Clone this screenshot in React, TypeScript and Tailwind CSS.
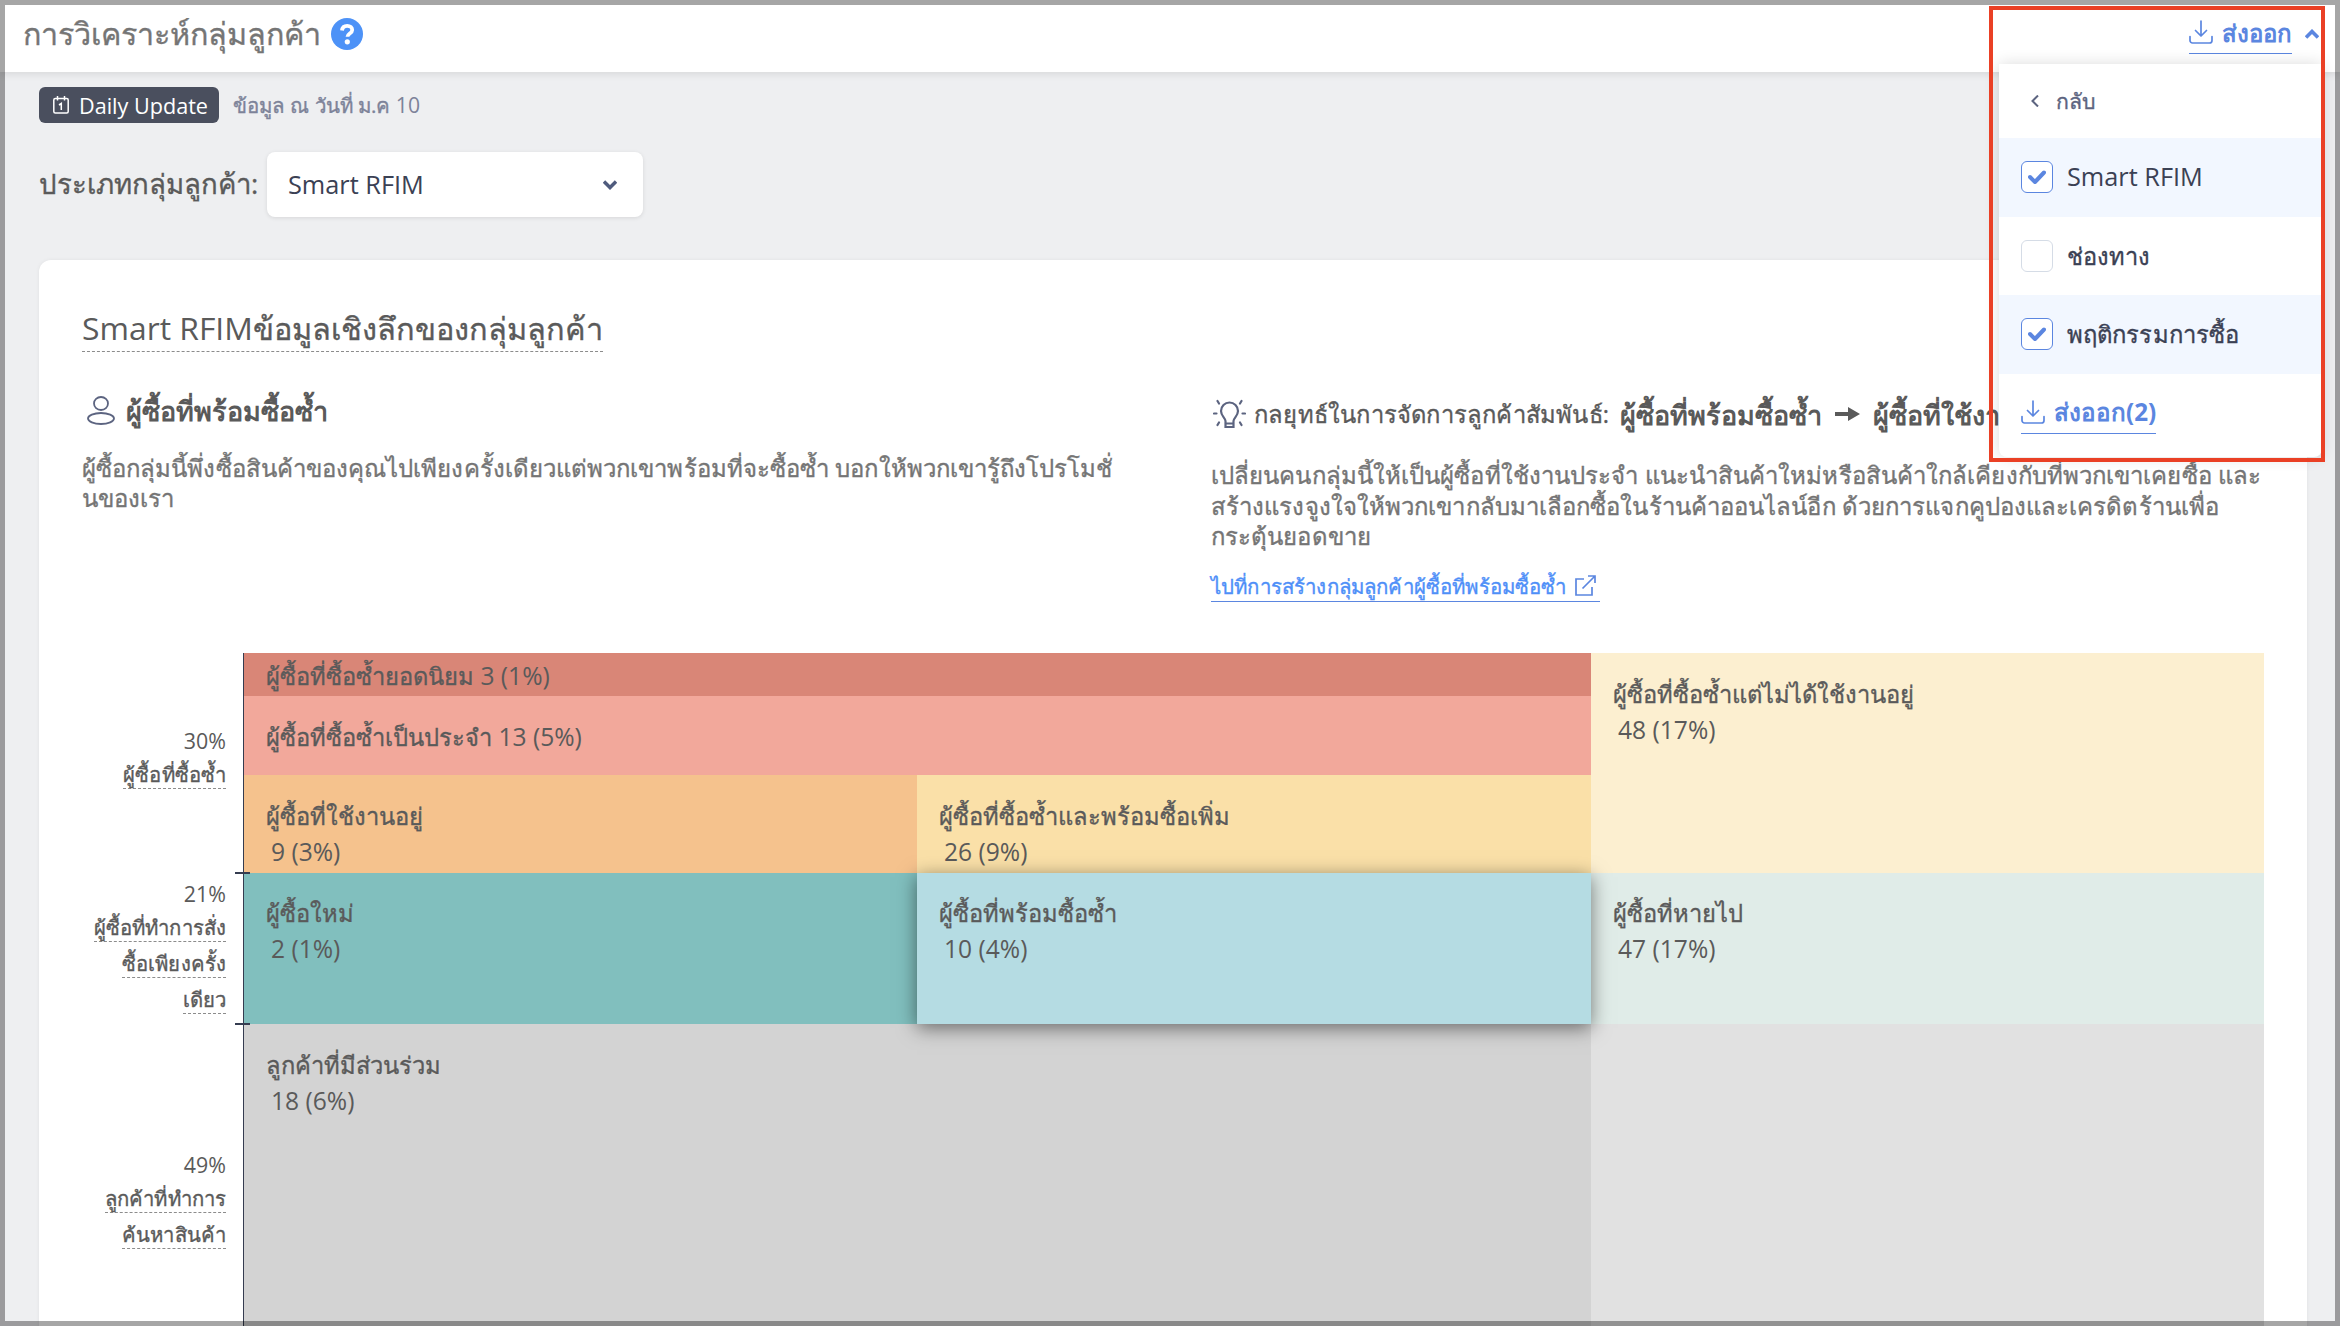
import type { ReactNode } from 'react';

function DownloadIcon() {
  return (
    <svg className="h-6 w-6 shrink-0" viewBox="0 0 24 24" fill="none" stroke="#5b86e0" strokeWidth="1.7" strokeLinecap="round" strokeLinejoin="round">
      <path d="M12 1v14.5M6.5 10.500l5.500 5.500 5.500-5.500M1 16.500v4a2.500 2.500 0 0 0 2.500 2.500h17a2.500 2.500 0 0 0 2.500-2.500v-4" />
    </svg>
  );
}

function Thai({ children }: { children: ReactNode }) {
  return <span className="text-[0.965em] [-webkit-text-stroke:0.35px_currentColor]">{children}</span>;
}

function Checkbox({ checked }: { checked: boolean }) {
  return (
    <span className={checked ? 'flex size-8 items-center justify-center rounded-md border border-[#5b86e0] bg-white' : 'flex size-8 rounded-md border border-[#d5dce6] bg-white'}>
      {checked && (
        <svg className="h-[14px] w-[18px]" viewBox="0 0 18 14" fill="none" stroke="#5b86e0" strokeWidth="4" strokeLinecap="round" strokeLinejoin="round">
          <path d="M2 7l5 5 9-9.500" />
        </svg>
      )}
    </span>
  );
}

function MenuRow({ label, checked }: { label: ReactNode; checked: boolean }) {
  return (
    <div className={checked ? 'flex h-[78.500px] items-center bg-[#f2f7ff] pl-[22px]' : 'flex h-[78.500px] items-center bg-white pl-[22px]'}>
      <Checkbox checked={checked} />
      <span className="ml-[14px] whitespace-nowrap text-[25.300px] text-[#3b4154]">{label}</span>
    </div>
  );
}

function ExportMenu() {
  return (
    <div className="absolute left-[1999px] top-16 h-[393px] w-[323px] rounded-b-lg bg-white shadow-[0_0_16px_rgba(0,0,0,0.14)]">
      <div className="flex h-[74px] items-center pl-8 text-[22px] text-[#5c6480]">
        <svg className="h-3 w-2" viewBox="0 0 8 12" fill="none" stroke="#5c6480" strokeWidth="2"><path d="M7 .5L1.500 6 7 11.500" /></svg>
        <span className="ml-[17px] pb-[2px]"><Thai>กลับ</Thai></span>
      </div>
      <MenuRow label="Smart RFIM" checked />
      <MenuRow label={<span className="text-[23.600px] [-webkit-text-stroke:0.35px_currentColor]">ช่องทาง</span>} checked={false} />
      <MenuRow label={<span className="text-[23.800px] tracking-[0.1px] [-webkit-text-stroke:0.35px_currentColor]">พฤติกรรมการซื้อ</span>} checked />
      <div className="ml-[22px] mt-[17px] flex h-[43px] w-fit items-center gap-[9px] border-b border-[#5b86e0] text-[24.200px] font-bold text-[#5b86e0]">
        <DownloadIcon />
        <span className="pt-[2px]">ส่งออก(2)</span>
      </div>
    </div>
  );
}

function Cell({ name, count, className }: { name: string; count: string; className: string }) {
  return (
    <div className={`whitespace-nowrap pl-[22px] leading-9 ${className}`}>
      <div><Thai>{name}</Thai></div>
      <div className="pl-[5px]">{count}</div>
    </div>
  );
}

function AxisGroup({ percent, lines, className }: { percent: string; lines: string[]; className: string }) {
  return (
    <div className={`flex flex-col items-end ${className}`}>
      <span className="h-[34px] text-[21.400px] leading-[33px]">{percent}</span>
      {lines.map((line) => (
        <span key={line} className="mb-[5px] h-[31px] whitespace-nowrap border-b border-dashed border-[#8c8c8c] text-[20.300px] leading-[32px] tracking-[0.1px] [-webkit-text-stroke:0.35px_currentColor]">{line}</span>
      ))}
    </div>
  );
}

function Strong({ children }: { children: ReactNode }) {
  return <span className="whitespace-nowrap text-[27px] font-bold">{children}</span>;
}

export default function App() {
  return (
    <div className="relative h-[1326px] w-[2340px] overflow-hidden bg-[#eeeff1] font-['Open_Sans','Noto_Sans',sans-serif] text-[#5a5a5a]">
      <header className="flex h-[72px] items-center bg-white pb-[6px] pl-[23px] shadow-[0_2px_8px_rgba(0,0,0,0.1)]">
        <h1 className="w-[298px] whitespace-nowrap pt-[2px] text-[30.500px] text-[#757575] [-webkit-text-stroke:0.35px_currentColor]">การวิเคราะห์กลุ่มลูกค้า</h1>
        <svg className="ml-[10px] mt-[2px] size-8" viewBox="0 0 32 32">
          <circle cx="16" cy="16" r="16" fill="#4d92f7" />
          <path d="M11 12.500c.3-3 2.300-4.700 5.200-4.700 3 0 5 1.700 5 4.200 0 3.400-4.700 3.600-4.700 6.700" fill="none" stroke="#fff" strokeWidth="3.800" />
          <circle cx="16.300" cy="23.800" r="2.600" fill="#fff" />
        </svg>
        <div className="-mt-[2px] ml-auto mr-[13px] flex h-[44px] w-[103px] items-center justify-between border-b border-[#5b86e0] text-[24px] font-bold text-[#5b86e0]">
          <DownloadIcon />
          <span className="pt-[2px]">ส่งออก</span>
        </div>
        <svg className="mr-[21px] mt-[2px] h-[10px] w-[14px]" viewBox="0 0 14 10" fill="none" stroke="#5b86e0" strokeWidth="3.600"><path d="M1 8.500l6-6 6 6" /></svg>
      </header>

      <main className="pl-[39px]">
        <div className="mt-[15px] flex h-9 items-center">
          <span className="flex h-9 w-[180px] items-center gap-[10px] rounded-md bg-[#4a4f5e] pl-[14px] text-[21.600px] text-white">
            <svg className="h-[18px] w-4" viewBox="0 0 16 18" fill="none" stroke="#fff" strokeWidth="1.500">
              <rect x=".8" y="2.500" width="14.400" height="14.500" rx="1.500" />
              <path d="M4.500 0v4.500M11.500 0v4.500M6 9l2.300-1.500V14" />
            </svg>
            <span className="whitespace-nowrap pt-[2px]">Daily Update</span>
          </span>
          <span className="ml-[14px] whitespace-nowrap text-[21.200px] text-[#7d8399]"><Thai>ข้อมูล ณ วันที่ ม.ค</Thai> 10</span>
        </div>

        <div className="mt-[29px] flex h-[65px] items-center">
          <span className="w-[228px] whitespace-nowrap pb-px text-[27.600px] [-webkit-text-stroke:0.35px_currentColor]">ประเภทกลุ่มลูกค้า:</span>
          <div className="flex h-[65px] w-[376px] items-center justify-between rounded-lg bg-white pl-[21px] pr-[26px] text-[25.300px] text-[#3b4154] shadow-[0_1px_4px_rgba(0,0,0,0.1)]">
            <span>Smart RFIM</span>
            <svg className="h-[10px] w-[14px]" viewBox="0 0 14 10" fill="none" stroke="#4f5b7d" strokeWidth="3.400"><path d="M1 1.500l6 6 6-6" /></svg>
          </div>
        </div>

        <section className="mt-[43px] h-[1100px] w-[2268px] rounded-xl bg-white pl-[43px] pt-[46px] shadow-[0_0_4px_rgba(0,0,0,0.06)]">
          <h2 className="inline-block h-[46px] whitespace-nowrap border-b border-dashed border-[#8c8c8c] align-top text-[31.850px] leading-[44px]">Smart RFIM<Thai>ข้อมูลเชิงลึกของกลุ่มลูกค้า</Thai></h2>

          <div className="mt-[38px] grid h-[263px] grid-cols-[1129px_1fr] text-[23.950px]">
            <div>
              <div className="flex h-10 items-center pl-[5px] pt-px">
                <svg className="h-[29px] w-7" viewBox="0 0 28 29" fill="none" stroke="#5c6480" strokeWidth="1.800">
                  <ellipse cx="14" cy="7.500" rx="7" ry="6.500" />
                  <ellipse cx="14" cy="22.500" rx="13" ry="5.500" />
                </svg>
                <span className="ml-[11px] pt-px"><Strong>ผู้ซื้อที่พร้อมซื้อซ้ำ</Strong></span>
              </div>
              <p className="mt-[23px] whitespace-nowrap leading-[30px] tracking-[0.06px] text-[#757575] [-webkit-text-stroke:0.35px_currentColor]">
                ผู้ซื้อกลุ่มนี้พึ่งซื้อสินค้าของคุณไปเพียงครั้งเดียวแต่พวกเขาพร้อมที่จะซื้อซ้ำ บอกให้พวกเขารู้ถึงโปรโมชั่<br />นของเรา
              </p>
            </div>
            <div>
              <div className="mt-1 flex h-10 items-center whitespace-nowrap">
                <svg className="ml-[2px] h-[30px] w-[33px]" viewBox="0 0 33 30" fill="none" stroke="#5c6480" strokeWidth="2.200" strokeLinecap="round">
                  <path d="M12.500 22c0-3-4.500-5-4.500-10a8.500 8.500 0 0 1 17 0c0 5-4.500 7-4.500 10v6h-8zM12.500 24.500h8M1 14.500h2.500M29.500 14.500H32M4.500 2l1.500 2.500M28.500 2L27 4.500M4.500 26L6 23.500M28.500 26L27 23.500" />
                </svg>
                <span className="ml-2 w-[357px] pt-[2px] text-[23.750px] tracking-[0.2px] [-webkit-text-stroke:0.35px_currentColor]">กลยุทธ์ในการจัดการลูกค้าสัมพันธ์:</span>
                <span className="ml-[9px] w-[202px] pt-[2px]"><Strong>ผู้ซื้อที่พร้อมซื้อซ้ำ</Strong></span>
                <svg className="mx-[13px] h-4 w-[25px]" viewBox="0 0 25 16"><path d="M0 6h13V1l12 7-12 7v-5H0z" fill="#5a5a5a" /></svg>
                <span className="pt-[2px]"><Strong>ผู้ซื้อที่ใช้งานประจำ</Strong></span>
              </div>
              <p className="mt-[26px] h-[92px] whitespace-nowrap leading-[30.700px] tracking-[0.08px] text-[#757575] [-webkit-text-stroke:0.35px_currentColor]">
                เปลี่ยนคนกลุ่มนี้ให้เป็นผู้ซื้อที่ใช้งานประจำ แนะนำสินค้าใหม่หรือสินค้าใกล้เคียงกับที่พวกเขาเคยซื้อ และ<br />
                สร้างแรงจูงใจให้พวกเขากลับมาเลือกซื้อในร้านค้าออนไลน์อีก ด้วยการแจกคูปองและเครดิตร้านเพื่อ<br />
                กระตุ้นยอดขาย
              </p>
              <a className="mt-[17.500px] flex h-[32px] w-[389px] items-center border-b border-[#5b86e0] text-[20.400px] text-[#4e8ff8]">
                <span className="whitespace-nowrap pt-[2px] tracking-[0.16px] [-webkit-text-stroke:0.35px_currentColor]">ไปที่การสร้างกลุ่มลูกค้าผู้ซื้อที่พร้อมซื้อซ้ำ</span>
                <svg className="ml-auto mr-1 size-[21px]" viewBox="0 0 21 21" fill="none" stroke="#5b86e0" strokeWidth="1.700"><path d="M9 4H1v16h16v-8M7.500 13.500L20 1M13 1h7v7" /></svg>
              </a>
            </div>
          </div>

          <div className="flex h-[673px]">
            <div className="w-[144px]">
              <AxisGroup percent="30%" lines={['ผู้ซื้อที่ซื้อซ้ำ']} className="h-[220px] pt-[71px]" />
              <AxisGroup percent="21%" lines={['ผู้ซื้อที่ทำการสั่ง', 'ซื้อเพียงครั้ง', 'เดียว']} className="h-[151px] pt-1" />
              <AxisGroup percent="49%" lines={['ลูกค้าที่ทำการ', 'ค้นหาสินค้า']} className="pt-[124px]" />
            </div>
            <div className="relative ml-[17px] grid w-[2021px] grid-cols-[673px_674px_673px] grid-rows-[43px_79px_98px_151px_302px] border-l border-[#353c50] text-[24.600px]">
              <div className="col-span-2 whitespace-nowrap bg-[#d98677] pl-[22px] leading-[45px]"><Thai>ผู้ซื้อที่ซื้อซ้ำยอดนิยม</Thai> 3 (1%)</div>
              <Cell name="ผู้ซื้อที่ซื้อซ้ำแต่ไม่ได้ใช้งานอยู่" count="48 (17%)" className="row-span-3 bg-[#fcefd0] pt-[23px]" />
              <div className="col-span-2 whitespace-nowrap bg-[#f2a89b] pl-[22px] leading-[81px]"><Thai>ผู้ซื้อที่ซื้อซ้ำเป็นประจำ</Thai> 13 (5%)</div>
              <Cell name="ผู้ซื้อที่ใช้งานอยู่" count="9 (3%)" className="bg-[#f5c28d] pt-[23px]" />
              <Cell name="ผู้ซื้อที่ซื้อซ้ำและพร้อมซื้อเพิ่ม" count="26 (9%)" className="bg-[#fae0a8] pt-[23px]" />
              <Cell name="ผู้ซื้อใหม่" count="2 (1%)" className="bg-[#81bfbe] pt-[22px]" />
              <Cell name="ผู้ซื้อที่พร้อมซื้อซ้ำ" count="10 (4%)" className="z-10 bg-[#b5dce3] pt-[22px] shadow-[0_4px_18px_rgba(0,0,0,0.5)]" />
              <Cell name="ผู้ซื้อที่หายไป" count="47 (17%)" className="bg-[#e0ece8] pt-[22px]" />
              <Cell name="ลูกค้าที่มีส่วนร่วม" count="18 (6%)" className="col-span-2 bg-[#d3d3d3] pt-[23px]" />
              <div className="bg-[#e1e1e1]" />
              <span className="absolute -left-[9px] top-[219px] h-[2px] w-[15px] bg-[#353c50]" />
              <span className="absolute -left-[9px] top-[370px] h-[2px] w-[15px] bg-[#353c50]" />
            </div>
          </div>
        </section>
      </main>

      <ExportMenu />
      <div className="pointer-events-none absolute inset-0 border-[5px] border-black/35" />
      <div className="pointer-events-none absolute left-[1989px] top-[6px] h-[456px] w-[336px] border-4 border-[#ea4025]" />
    </div>
  );
}
